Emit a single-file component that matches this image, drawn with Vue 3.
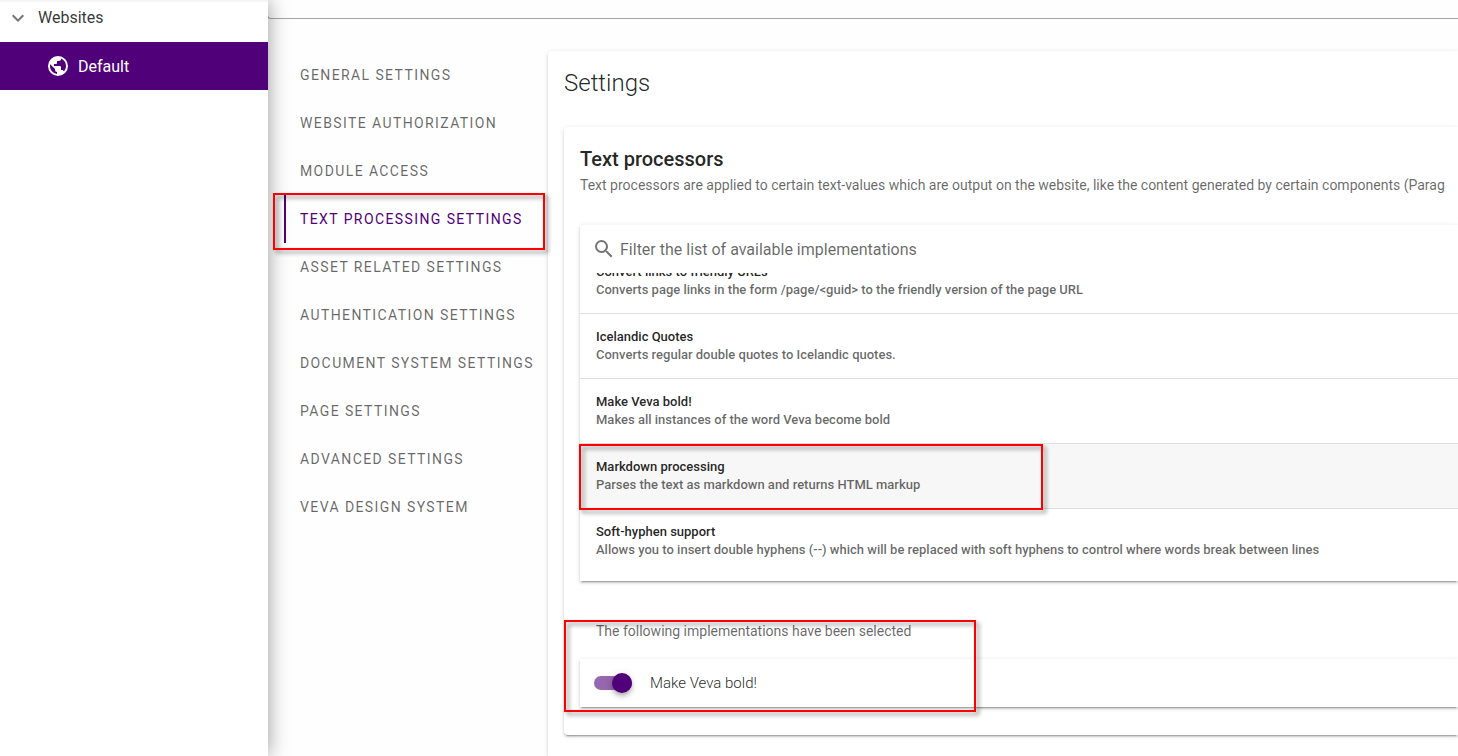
<script setup>
import { ref } from 'vue'

const tabs = [
  'General settings',
  'Website authorization',
  'Module access',
  'Text processing settings',
  'Asset related settings',
  'Authentication settings',
  'Document system settings',
  'Page settings',
  'Advanced settings',
  'Veva design system',
]
const activeTab = ref('Text processing settings')

const processors = [
  { name: 'Convert links to friendly URLs', text: 'Converts page links in the form /page/<guid> to the friendly version of the page URL' },
  { name: 'Icelandic Quotes', text: 'Converts regular double quotes to Icelandic quotes.' },
  { name: 'Make Veva bold!', text: 'Makes all instances of the word Veva become bold' },
  { name: 'Markdown processing', text: 'Parses the text as markdown and returns HTML markup' },
  { name: 'Soft-hyphen support', text: 'Allows you to insert double hyphens (--) which will be replaced with soft hyphens to control where words break between lines' },
]
const highlighted = ref('Markdown processing')
const filter = ref('')
const enabled = ref(true)
</script>

<template>
  <div class="app">
    <aside class="sidebar">
      <button class="group" type="button">
        <svg class="chevron" viewBox="0 0 24 24" aria-hidden="true">
          <path d="M7.41 8.58 12 13.17l4.59-4.59L18 10l-6 6-6-6z" />
        </svg>
        <span>Websites</span>
      </button>
      <a class="site" href="#">
        <svg class="globe" viewBox="0 0 24 24" aria-hidden="true">
          <path d="M17.9 17.39c-.26-.8-1.01-1.39-1.9-1.39h-1v-3a1 1 0 0 0-1-1H8v-2h2a1 1 0 0 0 1-1V7h2a2 2 0 0 0 2-2v-.41a7.984 7.984 0 0 1 2.9 12.8M11 19.93c-3.95-.49-7-3.85-7-7.93 0-.62.08-1.22.21-1.79L9 15v1a2 2 0 0 0 2 2m1-16A10 10 0 0 0 2 12a10 10 0 0 0 10 10 10 10 0 0 0 10-10A10 10 0 0 0 12 2z" />
        </svg>
        <span>Default</span>
      </a>
    </aside>

    <main class="content">
      <div class="topbar"></div>
      <div class="columns">
        <nav class="tabs">
          <button
            v-for="tab in tabs"
            :key="tab"
            type="button"
            class="tab"
            :class="{ active: tab === activeTab }"
            @click="activeTab = tab"
          >{{ tab }}</button>
        </nav>

        <section class="panel">
          <h1>Settings</h1>
          <div class="card">
            <h2>Text processors</h2>
            <p class="intro">Text processors are applied to certain text-values which are output on the website, like the content generated by certain components (Parag</p>

            <div class="picker">
              <label class="search">
                <svg viewBox="0 0 24 24" aria-hidden="true">
                  <path d="M9.5 3A6.5 6.5 0 0 1 16 9.5c0 1.61-.59 3.09-1.56 4.23l.27.27h.79l5 5-1.5 1.5-5-5v-.79l-.27-.27A6.516 6.516 0 0 1 9.5 16 6.5 6.5 0 0 1 3 9.5 6.5 6.5 0 0 1 9.5 3m0 2C7 5 5 7 5 9.5S7 14 9.5 14 14 12 14 9.5 12 5 9.5 5z" />
                </svg>
                <input v-model="filter" type="text" aria-label="Filter" placeholder="Filter the list of available implementations" />
              </label>
              <div class="viewport">
                <ul>
                  <li v-for="p in processors" :key="p.name" :class="{ hover: p.name === highlighted }">
                    <strong>{{ p.name }}</strong>
                    <span>{{ p.text }}</span>
                  </li>
                </ul>
              </div>
            </div>

            <p class="caption">The following implementations have been selected</p>
            <label class="selected">
              <input v-model="enabled" type="checkbox" role="switch" />
              <span>Make Veva bold!</span>
            </label>
          </div>
        </section>
      </div>
    </main>

    <div class="mark mark-tab"></div>
    <div class="mark mark-item"></div>
    <div class="mark mark-selected"></div>
  </div>
</template>

<style>
body {
  background: #fff;
}
</style>

<style scoped>
.app {
  position: relative;
  display: flex;
  min-height: 100vh;
  overflow: hidden;
  font-family: Roboto, "Liberation Sans", sans-serif;
  color: rgba(0, 0, 0, 0.87);
  background: #fefefe;
}
.app * {
  box-sizing: border-box;
}
button,
input {
  font-family: inherit;
}
.sidebar {
  position: relative;
  z-index: 1;
  flex: 0 0 268px;
  background: #fff;
  box-shadow: 0 0 20px rgba(0, 0, 0, 0.4);
}
.group {
  display: flex;
  align-items: center;
  gap: 8px;
  width: 100%;
  height: 42px;
  padding: 0 6px 7px;
  border: 0;
  background: linear-gradient(#f2f2f2, #fff 3px);
  font-size: 16px;
  color: rgba(0, 0, 0, 0.8);
}
.chevron {
  width: 24px;
  height: 24px;
  fill: #757575;
}
.site {
  display: flex;
  align-items: center;
  gap: 8px;
  height: 48px;
  padding-left: 46px;
  background: #500078;
  color: #fff;
  font-size: 16px;
  text-decoration: none;
}
.globe {
  width: 24px;
  height: 24px;
  fill: #fff;
}
.content {
  flex: 1;
  min-width: 0;
  display: flex;
  flex-direction: column;
}
.topbar {
  height: 19px;
  margin-left: -1px;
  border: 1px solid #a6a6a6;
  border-width: 0 0 1px 1px;
  border-radius: 0 0 0 4px;
}
.columns {
  flex: 1;
  display: flex;
  padding: 32px 0 0 16px;
}
.tabs {
  flex: 0 0 264px;
}
.tab {
  display: block;
  width: 100%;
  height: 48px;
  padding: 0 0 0 14px;
  border: 0;
  border-left: 2px solid transparent;
  background: none;
  font-size: 14px;
  font-weight: 400;
  letter-spacing: 0.1em;
  text-align: left;
  text-transform: uppercase;
  white-space: nowrap;
  color: rgba(0, 0, 0, 0.6);
}
.tab.active {
  border-left-color: #500078;
  color: #500078;
}
.panel,
.card,
.picker,
.selected {
  background: #fff;
  box-shadow: 0 3px 1px -2px rgba(0, 0, 0, 0.2), 0 2px 2px 0 rgba(0, 0, 0, 0.14), 0 1px 5px 0 rgba(0, 0, 0, 0.12);
}
.panel {
  flex: 1;
  min-width: 0;
  padding: 16px 0 0 16px;
  border-radius: 4px 0 0 0;
}
h1 {
  margin: 0 0 28px;
  font-size: 24px;
  line-height: 32px;
  font-weight: 300;
}
.card {
  padding: 16px 0 28px 16px;
  border-radius: 4px 0 0 4px;
}
h2 {
  margin: 0;
  font-size: 20px;
  line-height: 32px;
  font-weight: 500;
}
.intro {
  margin: 0 0 30px;
  overflow: hidden;
  font-size: 14px;
  line-height: 20px;
  white-space: nowrap;
  color: rgba(0, 0, 0, 0.6);
}
.picker {
  padding-bottom: 8px;
}
.search {
  display: flex;
  align-items: center;
  gap: 4px;
  height: 48px;
  padding: 0 12px;
}
.search svg {
  width: 24px;
  height: 24px;
  fill: #757575;
}
.search input {
  flex: 1;
  min-width: 0;
  padding: 0;
  border: 0;
  outline: 0;
  background: none;
  font-size: 16px;
}
.search input::placeholder {
  color: rgba(0, 0, 0, 0.6);
  opacity: 1;
}
.viewport {
  overflow: hidden;
}
ul {
  margin: -24px 0 0;
  padding: 0;
  list-style: none;
}
li {
  display: flex;
  flex-direction: column;
  padding: 14px 16px;
  font-size: 13px;
  line-height: 18px;
  font-weight: 500;
  white-space: nowrap;
}
li + li {
  border-top: 1px solid #e0e0e0;
}
li.hover {
  background: #f7f7f7;
}
li strong {
  font-weight: 500;
}
li span {
  color: rgba(0, 0, 0, 0.6);
}
.caption {
  margin: 40px 16px 18px;
  font-size: 14px;
  line-height: 20px;
  color: rgba(0, 0, 0, 0.6);
}
.selected {
  display: flex;
  align-items: center;
  gap: 18px;
  height: 48px;
  padding: 0 14px;
  font-size: 15px;
  font-weight: 300;
}
.selected input {
  appearance: none;
  display: flex;
  align-items: center;
  width: 38px;
  height: 14px;
  margin: 0;
  border-radius: 7px;
  background: #bdbdbd;
}
.selected input::before {
  content: "";
  width: 20px;
  height: 20px;
  border-radius: 50%;
  background: #fff;
  box-shadow: 0 2px 4px -1px rgba(0, 0, 0, 0.2), 0 4px 5px 0 rgba(0, 0, 0, 0.14), 0 1px 10px 0 rgba(0, 0, 0, 0.12);
}
.selected input:checked {
  justify-content: flex-end;
  background: #9666ae;
}
.selected input:checked::before {
  background: #500078;
}
.mark {
  position: absolute;
  z-index: 2;
  border: 2px solid #f00;
  filter: drop-shadow(3px 3px 2px rgba(0, 0, 0, 0.45));
  pointer-events: none;
}
.mark-tab {
  left: 273px;
  top: 193px;
  width: 272px;
  height: 57px;
}
.mark-item {
  left: 579px;
  top: 444px;
  width: 464px;
  height: 66px;
}
.mark-selected {
  left: 564px;
  top: 620px;
  width: 412px;
  height: 92px;
}
</style>
